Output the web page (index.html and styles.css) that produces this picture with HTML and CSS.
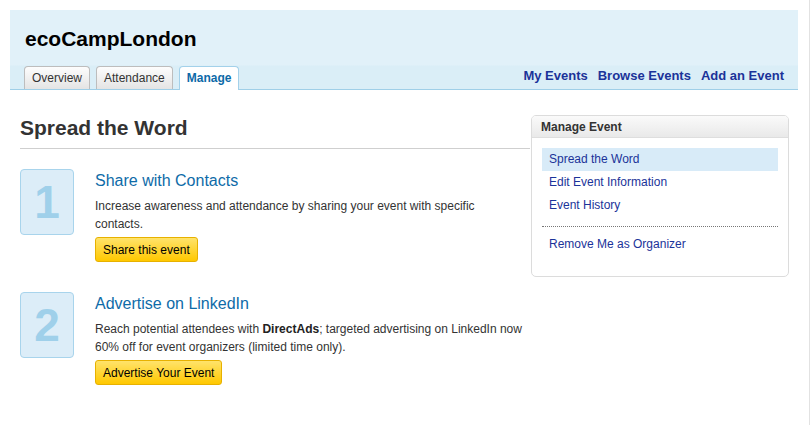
FILE: index.html
```html
<!DOCTYPE html>
<html>
    <head>
        <meta charset="UTF-8">
        <title>ecoCampLondon - Manage</title>
        <link rel="stylesheet" href="styles.css">
    </head>
    <body>
        <div class="page">
            <div class="header">
                <h1 class="event-name">ecoCampLondon</h1>
                <div class="header-bar">
                    <ul class="tabs">
                        <li class="tab">Overview</li>
                        <li class="tab">Attendance</li>
                        <li class="tab tab-active">Manage</li>
                    </ul>
                    <div class="nav-links">
                        <a href="#">My Events</a>
                        <a href="#">Browse Events</a>
                        <a href="#">Add an Event</a>
                    </div>
                </div>
            </div>

            <div class="content">
                <div class="main-col">
                    <h2 class="page-title">Spread the Word</h2>

                    <div class="step">
                        <div class="step-num">1</div>
                        <div class="step-body">
                            <h3 class="step-title">Share with Contacts</h3>
                            <p class="step-text">Increase awareness and attendance by sharing your event with specific contacts.</p>
                            <button class="yellow-btn" type="button">Share this event</button>
                        </div>
                    </div>

                    <div class="step">
                        <div class="step-num">2</div>
                        <div class="step-body">
                            <h3 class="step-title">Advertise on LinkedIn</h3>
                            <p class="step-text">Reach potential attendees with <b>DirectAds</b>; targeted advertising on LinkedIn now 60% off for event organizers (limited time only).</p>
                            <button class="yellow-btn" type="button">Advertise Your Event</button>
                        </div>
                    </div>
                </div>

                <div class="side-box">
                    <div class="side-head">Manage Event</div>
                    <ul class="side-list">
                        <li class="side-item side-current"><a href="#">Spread the Word</a></li>
                        <li class="side-item"><a href="#">Edit Event Information</a></li>
                        <li class="side-item"><a href="#">Event History</a></li>
                        <li class="side-sep"></li>
                        <li class="side-item"><a href="#">Remove Me as Organizer</a></li>
                    </ul>
                </div>
            </div>
        </div>
    </body>
</html>
```

FILE: styles.css
```css
html {
    background-color: #fff;
}

body {
    margin: 0;
    font-family: "Liberation Sans", Arial, sans-serif;
    font-size: 12px;
    color: #333;
}

a {
    text-decoration: none;
}

ul {
    list-style: none;
    margin: 0;
    padding: 0;
}

.page {
    width: 810px;
    min-height: 100vh;
    box-sizing: border-box;
    padding: 10px 11px 0 10px;
    border-right: 1px solid #e2e2e2;
}

/* header band with tabs */
.header {
    background: linear-gradient(#e1f1f9 0, #e1f1f9 55px, #daeef7 56px);
    border-bottom: 1px solid #9fcfe8;
}

.event-name {
    margin: 0;
    padding: 17px 0 0 15px;
    font-size: 21px;
    line-height: 24px;
    color: #000;
}

.header-bar {
    display: flex;
    justify-content: space-between;
    align-items: center;
    margin-top: 15px;
    padding-right: 14px;
}

.tabs {
    display: flex;
    gap: 6px;
    padding-left: 14px;
    margin-bottom: -1px;
}

.tab {
    height: 22px;
    line-height: 23px;
    padding: 0 7px;
    border: 1px solid #bdbdbd;
    border-bottom: none;
    border-radius: 4px 4px 0 0;
    background: linear-gradient(#fdfdfd, #e4e4e4);
    color: #333;
}

.tab-active {
    height: 23px;
    background: #fff;
    border-color: #a3d1ea;
    color: #0d6aa8;
    font-weight: bold;
}

.nav-links {
    display: flex;
    gap: 10px;
    padding-bottom: 4px;
}

.nav-links a {
    font-size: 13px;
    font-weight: bold;
    color: #1b3399;
}

/* body */
.content {
    display: flex;
    align-items: flex-start;
    margin-top: 25px;
}

.main-col {
    width: 510px;
    padding-left: 10px;
}

.page-title {
    margin: 0;
    padding-bottom: 8px;
    font-size: 21px;
    line-height: 25px;
    color: #333;
    border-bottom: 1px solid #cfcfcf;
}

.step {
    display: flex;
    margin-top: 20px;
    margin-bottom: 30px;
}

.step + .step {
    margin-top: 0;
}

.step-num {
    width: 52px;
    height: 64px;
    flex-shrink: 0;
    border: 1px solid #a8d4ec;
    border-radius: 4px;
    background-color: #dcedf8;
    color: #9fd0ea;
    font-size: 46px;
    font-weight: bold;
    line-height: 64px;
    text-align: center;
}

.step-body {
    margin-left: 21px;
    width: 428px;
}

.step-title {
    margin: 0;
    padding-top: 2px;
    font-size: 16px;
    font-weight: normal;
    line-height: 20px;
    color: #0e6ba8;
}

.step-text {
    margin: 6px 0 4px;
    line-height: 18px;
}

.step-text b {
    color: #222;
}

.yellow-btn {
    height: 25px;
    padding: 0 7px;
    border: 1px solid #e7b100;
    border-radius: 3px;
    background: linear-gradient(#ffe36b, #ffc800);
    font-family: "Liberation Sans", Arial, sans-serif;
    font-size: 12px;
    color: #000;
}

/* sidebar */
.side-box {
    width: 258px;
    margin-left: 1px;
    box-sizing: border-box;
    border: 1px solid #dcdcdc;
    border-radius: 5px;
    overflow: hidden;
}

.side-head {
    height: 21px;
    line-height: 22px;
    padding-left: 9px;
    border-bottom: 1px solid #dedede;
    background: linear-gradient(#fafafa, #e9e9e9);
    font-weight: bold;
    color: #333;
}

.side-list {
    padding: 10px 10px 20px;
}

.side-item {
    height: 23px;
    line-height: 23px;
    padding-left: 7px;
}

.side-item a {
    color: #1b3399;
}

.side-current {
    background-color: #d8ebf8;
}

.side-sep {
    margin: 9px 0 6px;
    border-top: 1px dotted #777;
}
```
